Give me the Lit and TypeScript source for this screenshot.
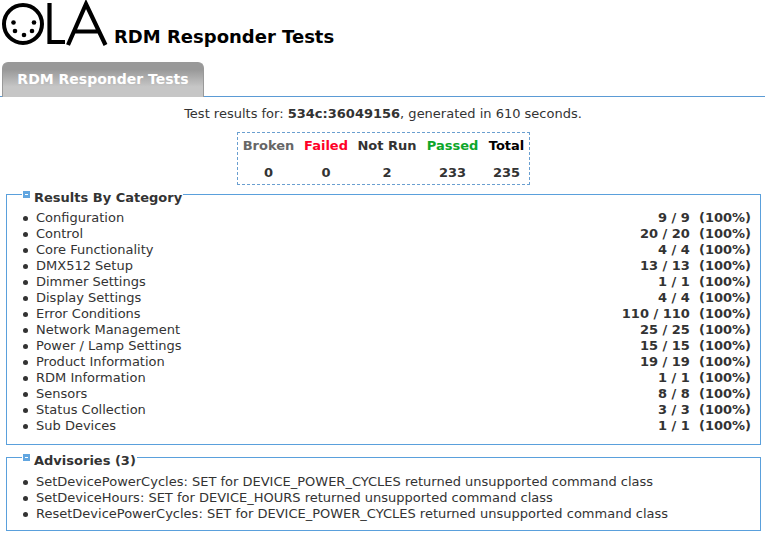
import { LitElement, html, css } from "lit";
import { customElement } from "lit/decorators.js";

const CATS: [string, string, string][] = [
  ["Configuration", "9 / 9", "(100%)"],
  ["Control", "20 / 20", "(100%)"],
  ["Core Functionality", "4 / 4", "(100%)"],
  ["DMX512 Setup", "13 / 13", "(100%)"],
  ["Dimmer Settings", "1 / 1", "(100%)"],
  ["Display Settings", "4 / 4", "(100%)"],
  ["Error Conditions", "110 / 110", "(100%)"],
  ["Network Management", "25 / 25", "(100%)"],
  ["Power / Lamp Settings", "15 / 15", "(100%)"],
  ["Product Information", "19 / 19", "(100%)"],
  ["RDM Information", "1 / 1", "(100%)"],
  ["Sensors", "8 / 8", "(100%)"],
  ["Status Collection", "3 / 3", "(100%)"],
  ["Sub Devices", "1 / 1", "(100%)"],
];
const ADV = [
  "SetDevicePowerCycles: SET for DEVICE_POWER_CYCLES returned unsupported command class",
  "SetDeviceHours: SET for DEVICE_HOURS returned unsupported command class",
  "ResetDevicePowerCycles: SET for DEVICE_POWER_CYCLES returned unsupported command class",
];

@customElement("app-root")
export class AppRoot extends LitElement {
  static styles = css`
    :host {
      display: block;
      font-family: "DejaVu Sans", sans-serif;
      font-size: 13px;
      line-height: 16px;
      color: #333;
      width: 765px;
      height: 536px;
      overflow: hidden;
      background: #fff;
    }
    .head { display: flex; align-items: flex-end; height: 48px; }
    .logo { display: block; width: 108px; height: 48px; }
    h1 {
      margin: 0 0 0 6px;
      font-size: 18px;
      line-height: 22px;
      color: #000;
      font-weight: bold;
    }
    .tabs {
      margin-top: 14px;
      height: 34px;
      border-bottom: 1px solid #5b9bd5;
      padding-left: 2px;
      display: flex;
    }
    .tab {
      width: 202px;
      box-sizing: border-box;
      height: 35px;
      border: 1px solid #999;
      border-bottom: none;
      border-radius: 6px 6px 0 0;
      background: linear-gradient(#999 0%, #999 20%, #c6c6c6 70%, #c6c6c6 100%);
      color: #fff;
      font-weight: bold;
      font-size: 14px;
      line-height: 33px;
      text-align: center;
    }
    .gen { text-align: center; margin-top: 9px; height: 16px; padding-left: 1px; }
    .counts {
      margin: 10px 0 0 237px;
      width: 293px;
      height: 53px;
      box-sizing: border-box;
      border: 1px dashed #6a9fd0;
      display: grid;
      padding-top: 2px;
      grid-template-columns: 61px 54px 68px 63px 45px;
      grid-template-rows: 22px 16px;
      row-gap: 8px;
      font-weight: bold;
      text-align: center;
      align-items: center;
    }
    .broken { color: #666; }
    .failed { color: #ff0028; }
    .passed { color: #0da62a; }
    .total { color: #000; }
    fieldset {
      margin: 0 4px 0 6px;
      padding: 0;
      border: 1px solid #5aa0dc;
      min-width: 0;
      box-sizing: border-box;
    }
    .f1 { margin-top: -3px; height: 263px; }
    .f2 { height: 86px; }
    legend {
      margin-left: 15px;
      padding: 8px 1px 1px;
      font-weight: bold;
      display: flex;
      align-items: flex-start;
      line-height: 16px;
    }
    .tog {
      width: 7px; height: 7px;
      background: #62a6e0;
      margin-right: 4px;
      margin-top: 1px;
      display: flex; align-items: center; justify-content: center;
    }
    .tog::after { content: ""; width: 3px; height: 1px; background: #fff; }
    ul { list-style: none; margin: 0; padding: 0 9px 0 14px; }
    li { display: flex; justify-content: space-between; height: 16px; white-space: nowrap; }
    .name { display: flex; align-items: center; }
    .name::before {
      content: "";
      width: 5px; height: 5px; border-radius: 50%;
      background: #333;
      margin-right: 8px;
      margin-left: 2px;
    }
    .r { font-weight: bold; white-space: pre; }
    .f1 ul { margin-top: 3px; }
    .f2 ul { margin-top: 4px; }
  `;

  render() {
    return html`
      <div class="head">
        <svg class="logo" viewBox="0 0 108 48" aria-label="OLA logo">
          <circle cx="23" cy="24" r="19" fill="none" stroke="#000" stroke-width="4"/>
          <circle cx="13.500" cy="22.500" r="2.3"/><circle cx="34" cy="22.500" r="2.3"/>
          <circle cx="15" cy="31" r="2.3"/><circle cx="32" cy="31" r="2.3"/>
          <circle cx="24" cy="35" r="2.3"/>
          <path d="M49.500 3V42H65" fill="none" stroke="#000" stroke-width="4.200"/>
          <path d="M68 45L86 4L105.500 45M74.500 31.500H99" fill="none" stroke="#000" stroke-width="4.200"/>
        </svg>
        <h1>RDM Responder Tests</h1>
      </div>
      <div class="tabs"><div class="tab">RDM Responder Tests</div></div>
      <div class="gen">Test results for: <b>534c:36049156</b>, generated in 610 seconds.</div>
      <div class="counts">
        <span class="broken">Broken</span><span class="failed">Failed</span><span>Not Run</span><span class="passed">Passed</span><span class="total">Total</span>
        <span>0</span><span>0</span><span>2</span><span>233</span><span>235</span>
      </div>
      <fieldset class="f1">
        <legend><span class="tog"></span>Results By Category</legend>
        <ul>${CATS.map(([n, a, p]) => html`<li><span class="name">${n}</span><span class="r">${a}  ${p}</span></li>`)}</ul>
      </fieldset>
      <fieldset class="f2">
        <legend><span class="tog"></span>Advisories (3)</legend>
        <ul>${ADV.map((n) => html`<li><span class="name">${n}</span></li>`)}</ul>
      </fieldset>
    `;
  }
}
